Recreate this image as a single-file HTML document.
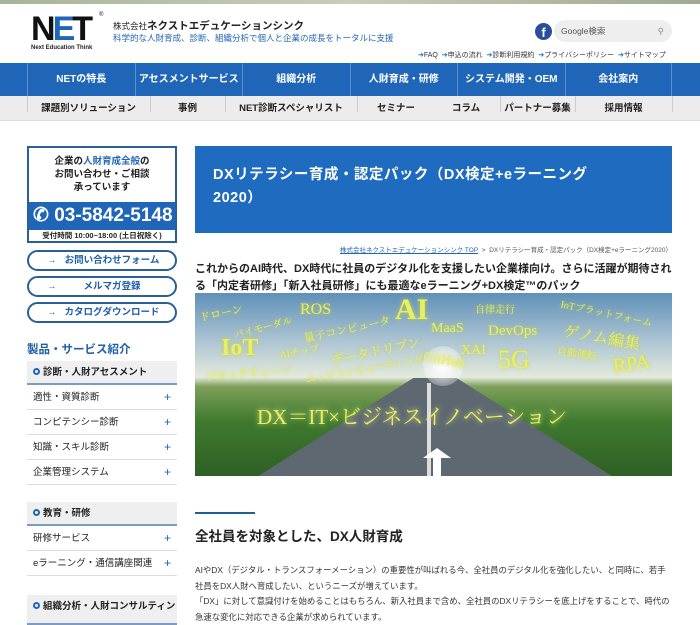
<!DOCTYPE html><html><head><meta charset="utf-8"><style>
*{margin:0;padding:0;box-sizing:border-box}
body{width:700px;height:613px;overflow:hidden;background:#fff;font-family:"Liberation Sans","Noto Sans CJK JP",sans-serif;color:#222;position:relative}
.a{position:absolute}
.nav{top:63px;left:0;width:700px;height:33px;background:#1f66b8;display:flex;padding-left:27px}
.nav div{width:107.5px;border-left:1px solid #5a8fd0;color:#fff;font-size:10px;font-weight:bold;text-align:center;line-height:33px}
.nav div:last-child{border-right:1px solid #5a8fd0}
.sub{top:96px;left:0;width:700px;height:25px;background:#ececec;border-bottom:1px solid #ddd}
.sub span{position:absolute;top:0;line-height:25px;font-size:9.5px;color:#222;font-weight:bold;text-align:center}
.sep{position:absolute;top:5px;height:16px;border-left:1px solid #ccc}
.btn{left:27px;width:150px;height:21px;border:2px solid #2a5f98;border-radius:11px;font-size:9.5px;color:#1f5fa8;font-weight:bold;line-height:17px}
.btn b{position:absolute;left:18px;top:0}
.btn span{position:absolute;left:0;width:100%;text-align:center;padding-left:20px}
.mh{left:27px;width:150px;height:24px;background:#efefef;border-bottom:2px solid #7a9cc2;font-size:9.5px;font-weight:bold;line-height:24px;padding-left:6px}
.mh i{display:inline-block;width:7px;height:7px;border:2px solid #1f66b8;border-radius:50%;margin-right:3px}
.mi{left:27px;width:150px;height:25px;border-bottom:1px solid #ddd;font-size:9.5px;line-height:25px;padding-left:6px}
.mi:after{content:"+";position:absolute;right:6px;color:#1f66b8;font-size:12px}
.w{position:absolute;color:#e8f060;font-family:"Liberation Serif","Noto Serif CJK SC",serif;text-shadow:0 0 4px #c8d040;white-space:nowrap}
</style></head><body>
<div class="a" style="top:0;left:0;width:700px;height:4px;background:linear-gradient(90deg,#a8b49a,#c8ceb8,#a0aa90)"></div>
<div class="a" style="left:31px;top:14px;font-family:'Liberation Sans';font-weight:900;font-size:34px;letter-spacing:-3px;line-height:30px;color:#111">N<span style="color:#1f66b8">E</span>T</div>
<div class="a" style="left:99px;top:12px;font-size:6px">®</div>
<div class="a" style="left:31px;top:45px;font-size:6px;font-weight:bold">Next Education Think</div>
<div class="a" style="left:113px;top:18px;font-size:10.5px;font-weight:bold"><span style="font-size:8.5px;font-weight:normal">株式会社</span>ネクストエデュケーションシンク</div>
<div class="a" style="left:113px;top:32px;font-size:8.5px;color:#1f66b8">科学的な人財育成、診断、組織分析で個人と企業の成長をトータルに支援</div>
<div class="a" style="left:535px;top:23px;width:17px;height:17px;border-radius:50%;background:#2a4f9a;color:#fff;font-weight:bold;font-size:13px;text-align:center;line-height:19px">f</div>
<div class="a" style="left:554px;top:20px;width:118px;height:22px;border-radius:11px;background:#eee;font-size:8.5px;color:#555;line-height:22px;padding-left:7px">Google検索<span style="position:absolute;right:8px;color:#888">⚲</span></div>
<div class="a" style="left:418px;top:50px;font-size:7px;color:#333;white-space:nowrap"><span style="color:#1f66b8">➔</span>FAQ&nbsp;&nbsp;<span style="color:#1f66b8">➔</span>申込の流れ&nbsp;&nbsp;<span style="color:#1f66b8">➔</span>診断利用規約&nbsp;&nbsp;<span style="color:#1f66b8">➔</span>プライバシーポリシー&nbsp;&nbsp;<span style="color:#1f66b8">➔</span>サイトマップ</div>
<div class="a nav"><div>NETの特長</div><div>アセスメントサービス</div><div>組織分析</div><div>人財育成・研修</div><div>システム開発・OEM</div><div>会社案内</div></div>
<div class="a sub">
<span class="sep" style="left:27px"></span><span style="left:27px;width:123px">課題別ソリューション</span>
<span class="sep" style="left:150px"></span><span style="left:150px;width:75px">事例</span>
<span class="sep" style="left:225px"></span><span style="left:225px;width:132px">NET診断スペシャリスト</span>
<span class="sep" style="left:357px"></span><span style="left:357px;width:78px">セミナー</span>
<span style="left:420px;width:92px">コラム</span>
<span class="sep" style="left:500px"></span><span style="left:500px;width:75px">パートナー募集</span>
<span class="sep" style="left:575px"></span><span style="left:575px;width:97px">採用情報</span>
<span class="sep" style="left:672px"></span></div>
<!-- sidebar -->
<div class="a" style="left:27px;top:146px;width:150px;height:97px;border:2px solid #2a5f98">
<div style="text-align:center;font-size:9.5px;font-weight:bold;line-height:13px;padding-top:7px;height:54px">企業の<span style="color:#1f66b8">人財育成全般</span>の<br>お問い合わせ・ご相談<br>承っています</div>
<div style="background:#1f66b8;color:#fff;height:28px;font-size:19px;font-weight:bold;line-height:28px;padding-left:4px;font-family:'Liberation Sans Narrow','Liberation Sans',sans-serif">✆ 03-5842-5148</div>
<div style="font-size:7.5px;font-weight:bold;text-align:center;line-height:11px">受付時間 10:00~18:00 (土日祝除く)</div></div>
<div class="a btn" style="top:250px"><b>→</b><span>お問い合わせフォーム</span></div>
<div class="a btn" style="top:276px"><b>→</b><span>メルマガ登録</span></div>
<div class="a btn" style="top:302px"><b>→</b><span>カタログダウンロード</span></div>
<div class="a" style="left:27px;top:341px;font-size:11.5px;font-weight:bold;color:#1f5fa8">製品・サービス紹介</div>
<div class="a mh" style="top:361px"><i></i>診断・人財アセスメント</div>
<div class="a mi" style="top:385px">適性・資質診断</div>
<div class="a mi" style="top:410px">コンピテンシー診断</div>
<div class="a mi" style="top:435px">知識・スキル診断</div>
<div class="a mi" style="top:460px">企業管理システム</div>
<div class="a mh" style="top:502px"><i></i>教育・研修</div>
<div class="a mi" style="top:526px">研修サービス</div>
<div class="a mi" style="top:551px">eラーニング・通信講座関連</div>
<div class="a mh" style="top:595px;height:30px"><i></i>組織分析・人財コンサルティン</div>
<!-- main -->
<div class="a" style="left:195px;top:146px;width:477px;height:87px;background:#1f6bbf;color:#fff;font-size:14.5px;font-weight:bold;line-height:23px;padding:18px 0 0 18px;letter-spacing:.5px">DXリテラシー育成・認定パック（DX検定+eラーニング<br>2020）</div>
<div class="a" style="right:28px;top:244px;font-size:6.5px;color:#555"><span style="color:#1f66b8;text-decoration:underline">株式会社ネクストエデュケーションシンク TOP</span>&nbsp;&nbsp;&gt;&nbsp;&nbsp;DXリテラシー育成・認定パック（DX検定+eラーニング2020）</div>
<div class="a" style="left:195px;top:261px;width:480px;font-size:11px;font-weight:bold;line-height:17px">これからのAI時代、DX時代に社員のデジタル化を支援したい企業様向け。さらに活躍が期待される「内定者研修」「新入社員研修」にも最適なeラーニング+DX検定™のパック</div>
<div class="a" style="left:195px;top:293px;width:477px;height:183px;overflow:hidden;background:linear-gradient(180deg,#5f90b8 0%,#a9c2d2 25%,#e3eadc 46%,#7fa05a 51%,#3f7a2e 70%,#2e5f24 100%)">
<div class="a" style="left:60px;top:85px;width:360px;height:100px;background:#5d6870;clip-path:polygon(44% 0,56% 0,100% 100%,0 100%)"></div>
<div class="a" style="left:232px;top:90px;width:4px;height:93px;background:#ddd"></div>
<div class="a" style="left:228px;top:53px;width:40px;height:40px;border-radius:50%;background:radial-gradient(#fff,rgba(255,255,255,0))"></div>
<div class="w" style="left:4px;top:12px;font-size:11px;transform:rotate(-12deg)">ドローン</div>
<div class="w" style="left:38px;top:26px;font-size:10px;transform:rotate(-15deg)">バイモーダル</div>
<div class="w" style="left:105px;top:8px;font-size:16px">ROS</div>
<div class="w" style="left:108px;top:28px;font-size:11px;transform:rotate(-12deg)">量子コンピュータ</div>
<div class="w" style="left:200px;top:0px;font-size:30px;font-weight:bold">AI</div>
<div class="w" style="left:236px;top:28px;font-size:14px">MaaS</div>
<div class="w" style="left:280px;top:8px;font-size:10px">自律走行</div>
<div class="w" style="left:293px;top:30px;font-size:15px">DevOps</div>
<div class="w" style="left:365px;top:12px;font-size:10px;transform:rotate(12deg)">IoTプラットフォーム</div>
<div class="w" style="left:368px;top:32px;font-size:16px;transform:rotate(10deg)">ゲノム編集</div>
<div class="w" style="left:26px;top:42px;font-size:24px;font-weight:bold">IoT</div>
<div class="w" style="left:84px;top:50px;font-size:10px;transform:rotate(-10deg)">AIチップ</div>
<div class="w" style="left:135px;top:48px;font-size:13px;transform:rotate(-12deg)">データドリブン</div>
<div class="w" style="left:266px;top:50px;font-size:14px">XAI</div>
<div class="w" style="left:303px;top:52px;font-size:26px">5G</div>
<div class="w" style="left:362px;top:52px;font-size:10px;transform:rotate(8deg)">自動運転</div>
<div class="w" style="left:418px;top:60px;font-size:20px;transform:rotate(-8deg)">RPA</div>
<div class="w" style="left:10px;top:72px;font-size:11px;transform:rotate(-5deg)">ブロックチェーン</div>
<div class="w" style="left:110px;top:68px;font-size:10px;transform:rotate(-10deg)">エッジコンピューティング</div>
<div class="w" style="left:228px;top:60px;font-size:14px;transform:rotate(10deg)">GitHub</div>
<div class="w" style="left:62px;top:108px;font-size:21px;text-shadow:0 0 6px #ee8">DX＝IT×ビジネスイノベーション</div>
<div class="a" style="left:228px;top:155px;width:0;height:0;border-left:14px solid transparent;border-right:14px solid transparent;border-bottom:10px solid #fff"></div>
<div class="a" style="left:238px;top:164px;width:8px;height:20px;background:#fff"></div>
</div>
<div class="a" style="left:195px;top:512px;width:60px;height:2px;background:#1f5f98"></div>
<div class="a" style="left:195px;top:525px;font-size:13.5px;font-weight:bold">全社員を対象とした、DX人財育成</div>
<div class="a" style="left:195px;top:563px;width:495px;font-size:8.4px;line-height:15.5px;color:#333;white-space:nowrap">AIやDX（デジタル・トランスフォーメーション）の重要性が叫ばれる今、全社員のデジタル化を強化したい、と同時に、若手<br>社員をDX人財へ育成したい、というニーズが増えています。<br>「DX」に対して意識付けを始めることはもちろん、新入社員まで含め、全社員のDXリテラシーを底上げをすることで、時代の<br>急速な変化に対応できる企業が求められています。</div>
</body></html>
